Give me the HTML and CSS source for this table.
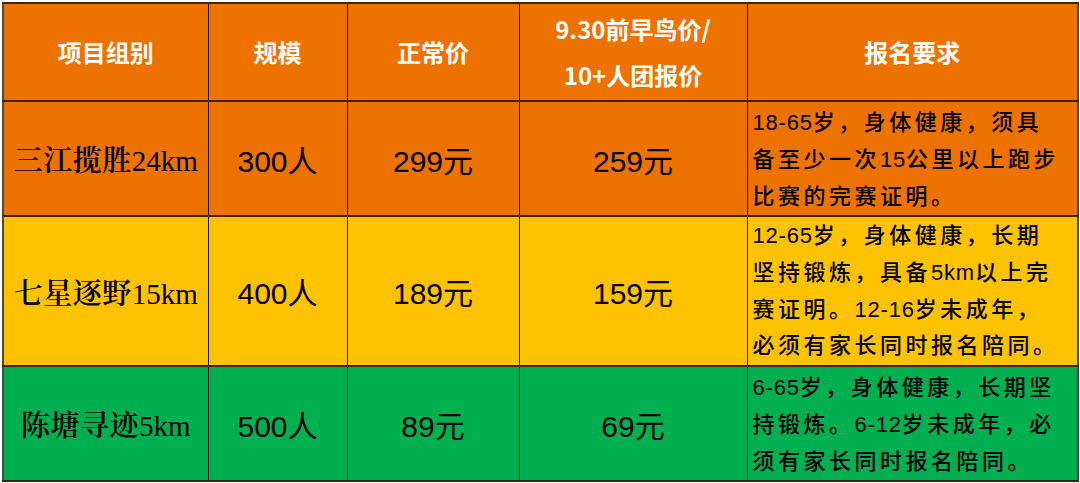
FILE: index.html
```html
<!DOCTYPE html>
<html lang="zh">
<head>
<meta charset="utf-8">
<title>报名价格表</title>
<link rel="stylesheet" href="styles.css">
</head>
<body>
<div class="sheet">
<table class="price">
  <colgroup>
    <col class="c1"><col class="c2"><col class="c3"><col class="c4"><col class="c5">
  </colgroup>
  <thead>
    <tr class="head">
      <th>项目组别</th>
      <th>规模</th>
      <th>正常价</th>
      <th class="two">9.30前早鸟价/<br>10+人团报价</th>
      <th>报名要求</th>
    </tr>
  </thead>
  <tbody>
    <tr class="r1 orange">
      <td class="name"><span class="zh">三江揽胜</span>24km</td>
      <td class="num">300人</td>
      <td class="num">299元</td>
      <td class="num">259元</td>
      <td class="req"><span class="d">18-65</span>岁，身体健康，须具<br>备至少一次<span class="d">15</span>公里以上跑步<br>比赛的完赛证明。</td>
    </tr>
    <tr class="r2 yellow">
      <td class="name"><span class="zh">七星逐野</span>15km</td>
      <td class="num">400人</td>
      <td class="num">189元</td>
      <td class="num">159元</td>
      <td class="req"><span class="d">12-65</span>岁，身体健康，长期<br>坚持锻炼，具备<span class="d">5km</span>以上完<br>赛证明。<span class="d">12-16</span>岁未成年，<br>必须有家长同时报名陪同。</td>
    </tr>
    <tr class="r3 green">
      <td class="name"><span class="zh">陈塘寻迹</span>5km</td>
      <td class="num">500人</td>
      <td class="num">89元</td>
      <td class="num">69元</td>
      <td class="req"><span class="d">6-65</span>岁，身体健康，长期坚<br>持锻炼。<span class="d">6-12</span>岁未成年，必<br>须有家长同时报名陪同。</td>
    </tr>
  </tbody>
</table>
</div>
</body>
</html>
```
FILE: styles.css
```css
html, body {
  margin: 0;
  padding: 0;
  background: #ffffff;
}

.sheet {
  padding: 2px 3px 0 2px;
  width: 1075px;
}

.price {
  border-collapse: collapse;
  table-layout: fixed;
  width: 1075px;
  border: 2px solid #4a4a4a;
}

.c1 { width: 205px; }
.c2 { width: 139px; }
.c3 { width: 172px; }
.c4 { width: 228px; }
.c5 { width: 331px; }

.price th,
.price td {
  padding: 0;
  border-left: 1px solid #1a1a1a;
  border-right: 1px solid #1a1a1a;
  border-top: 2px solid #3e2410;
  border-bottom: 2px solid #3e2410;
  text-align: center;
  vertical-align: middle;
  white-space: nowrap;
}

.head th {
  height: 96px;
  background: #ee7200;
  color: #ffffff;
  font-family: "Noto Sans CJK SC", "Liberation Sans", sans-serif;
  font-weight: 700;
  font-size: 24px;
  line-height: 32px;
}

.head th.two {
  line-height: 46px;
  font-size: 24px;
}

.orange td { background: #ee7200; }
.yellow td { background: #ffc200; }
.green td { background: #00b050; }

.r1 td { height: 105px; }
.r2 td { height: 146px; }
.r3 td { height: 106px; }

.name {
  font-family: "Liberation Serif", "Noto Serif CJK SC", "Noto Sans CJK SC", serif;
  font-size: 29px;
  color: #000000;
}

.name .zh {
  font-weight: 600;
  letter-spacing: 0.5px;
}

.num {
  font-family: "Liberation Sans", "Noto Sans CJK SC", sans-serif;
  font-size: 30px;
  color: #000000;
}

.price td.req {
  text-align: left;
  vertical-align: top;
  padding: 2px 0 0 5px;
  font-family: "Liberation Sans", "Noto Sans CJK SC", sans-serif;
  font-weight: 500;
  font-size: 22px;
  line-height: 37px;
  letter-spacing: 3.5px;
  color: #000000;
}

.r2 td.req {
  padding-top: 1px;
  line-height: 36.8px;
}

.req .d {
  letter-spacing: 0.8px;
  font-weight: 400;
}
```
